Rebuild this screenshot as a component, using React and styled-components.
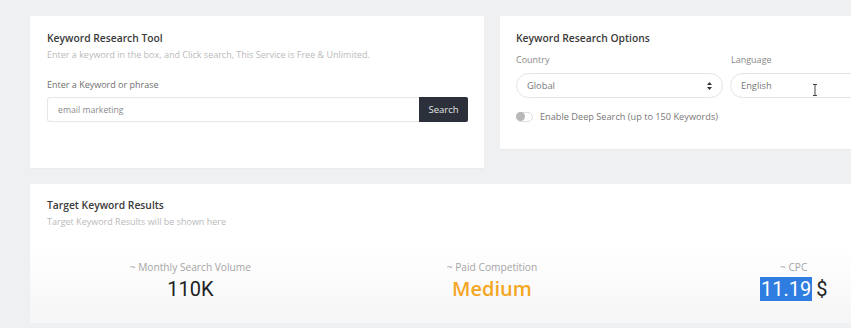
import React from "react";
import styled, { createGlobalStyle } from "styled-components";

const GlobalStyle = createGlobalStyle`
  html, body {
    margin: 0;
    padding: 0;
    background: #eff0f2;
    overflow: hidden;
  }
  body {
    font-family: "Open Sans", "Noto Sans", Arial, sans-serif;
  }
`;

const Page = styled.div`
  width: 924px;
  padding: 16px 0 0 30px;
  display: flex;
  flex-direction: column;
  gap: 16px;
`;

const TopRow = styled.div`
  display: flex;
  align-items: flex-start;
  gap: 16px;
`;

const Card = styled.div`
  background: #ffffff;
  box-shadow: 0 1px 2px rgba(0, 0, 0, 0.03);
  box-sizing: border-box;
  width: ${(p) => p.$width || "100%"};
  height: ${(p) => p.$height};
  padding: ${(p) => p.$padding || "15px 16px 0 17px"};
`;

const ResultsCard = styled(Card)`
  background: linear-gradient(#ffffff 45%, #f6f6f7);
`;

const Title = styled.h3`
  margin: 0;
  font-size: 10.3px;
  line-height: 14px;
  font-weight: 600;
  color: #3a3a3a;
`;

const Subtitle = styled.p`
  margin: 4px 0 0;
  font-size: 9px;
  line-height: 12px;
  color: #bababa;
`;

const Label = styled.div`
  margin-top: ${(p) => p.$top || "0"};
  font-size: 9px;
  line-height: 12px;
  color: #707070;
`;

const InputRow = styled.div`
  margin-top: 6px;
  display: flex;
  width: 421px;
  height: 25px;
`;

const TextInput = styled.div`
  flex: 1;
  box-sizing: border-box;
  border: 1px solid #e6e6e6;
  border-right: none;
  border-radius: 3px 0 0 3px;
  padding-left: 10px;
  display: flex;
  align-items: center;
  font-size: 8.7px;
  color: #8a8a8a;
`;

const SearchButton = styled.button`
  width: 49px;
  border: none;
  border-radius: 0 2px 2px 0;
  background: #2c303b;
  color: #e4e4e4;
  font-family: inherit;
  font-size: 9.5px;
  padding: 0;
`;

const Fields = styled.div`
  margin-top: 9px;
  display: grid;
  grid-template-columns: 207px 1fr;
  column-gap: 7px;
`;

const Field = styled.div`
  display: flex;
  flex-direction: column;
  gap: 7px;
  position: relative;
`;

const FieldLabel = styled.div`
  font-size: 9px;
  line-height: 12px;
  color: #888;
  padding-left: ${(p) => p.$indent || "0"};
`;

const Pill = styled.div`
  box-sizing: border-box;
  height: 25px;
  border: 1px solid #e4e4e4;
  border-radius: 13px;
  padding: 0 10px;
  display: flex;
  align-items: center;
  justify-content: space-between;
  font-size: 9.3px;
  color: #777;
`;

const Cursor = styled.svg`
  position: absolute;
  left: 82px;
  top: 30px;
`;

const ToggleRow = styled.div`
  margin-top: 12px;
  display: flex;
  align-items: center;
  gap: 7px;
  font-size: 9.2px;
  color: #777;
`;

const Track = styled.span`
  box-sizing: border-box;
  width: 17px;
  height: 10px;
  border: 1px solid #dedede;
  border-radius: 6px;
  display: flex;
  align-items: center;
`;

const Knob = styled.span`
  width: 9px;
  height: 9px;
  margin-left: -1px;
  border-radius: 50%;
  background: #b9b9b9;
`;

const Stats = styled.div`
  margin-top: 33px;
  display: grid;
  grid-template-columns: 1fr 1fr 1fr;
`;

const Stat = styled.div`
  display: flex;
  flex-direction: column;
  align-items: center;
  gap: 5px;
  transform: translateX(${(p) => p.$shift || "0"});
`;

const StatLabel = styled.div`
  font-size: 10.2px;
  line-height: 12px;
  color: #a5a5a5;
`;

const StatValue = styled.div`
  font-family: ${(p) => (p.$geo ? '"Open Sans", sans-serif' : "Roboto, Arial, sans-serif")};
  font-size: 20px;
  line-height: 22px;
  font-weight: ${(p) => p.$weight || 400};
  color: ${(p) => p.$color || "#222"};
`;

const Selected = styled.span`
  background: #2f7de1;
  color: #ffffff;
  padding: 0 1px;
  margin-right: 4px;
`;

export default function App() {
  return (
    <>
      <GlobalStyle />
      <Page>
        <TopRow>
          <Card $width="454px" $height="152px">
            <Title>Keyword Research Tool</Title>
            <Subtitle>
              Enter a keyword in the box, and Click search, This Service is Free &amp; Unlimited.
            </Subtitle>
            <Label $top="18px">Enter a Keyword or phrase</Label>
            <InputRow>
              <TextInput>email marketing</TextInput>
              <SearchButton>Search</SearchButton>
            </InputRow>
          </Card>
          <Card $width="454px" $height="133px" $padding="15px 16px 0 16px">
            <Title>Keyword Research Options</Title>
            <Fields>
              <Field>
                <FieldLabel>Country</FieldLabel>
                <Pill>
                  Global
                  <svg width="5" height="8" viewBox="0 0 5 8">
                    <path d="M2.5 0 L5 3 H0 Z M0 5 H5 L2.5 8 Z" fill="#333" />
                  </svg>
                </Pill>
              </Field>
              <Field>
                <FieldLabel $indent="1px">Language</FieldLabel>
                <Pill>English</Pill>
                <Cursor width="6" height="12" viewBox="0 0 6 12">
                  <path d="M1 0.5 H5 M3 0.5 V11.5 M1 11.5 H5" stroke="#444" strokeWidth="1" fill="none" />
                </Cursor>
              </Field>
            </Fields>
            <ToggleRow>
              <Track>
                <Knob />
              </Track>
              Enable Deep Search (up to 150 Keywords)
            </ToggleRow>
          </Card>
        </TopRow>
        <ResultsCard $height="139px" $padding="14px 17px 0 17px">
          <Title>Target Keyword Results</Title>
          <Subtitle>Target Keyword Results will be shown here</Subtitle>
          <Stats>
            <Stat $shift="-5px">
              <StatLabel>~ Monthly Search Volume</StatLabel>
              <StatValue>110K</StatValue>
            </Stat>
            <Stat>
              <StatLabel>~ Paid Competition</StatLabel>
              <StatValue $geo $weight={600} $color="#f5a623">
                Medium
              </StatValue>
            </Stat>
            <Stat $shift="5px">
              <StatLabel>~ CPC</StatLabel>
              <StatValue>
                <Selected>11.19</Selected>$
              </StatValue>
            </Stat>
          </Stats>
        </ResultsCard>
      </Page>
    </>
  );
}
